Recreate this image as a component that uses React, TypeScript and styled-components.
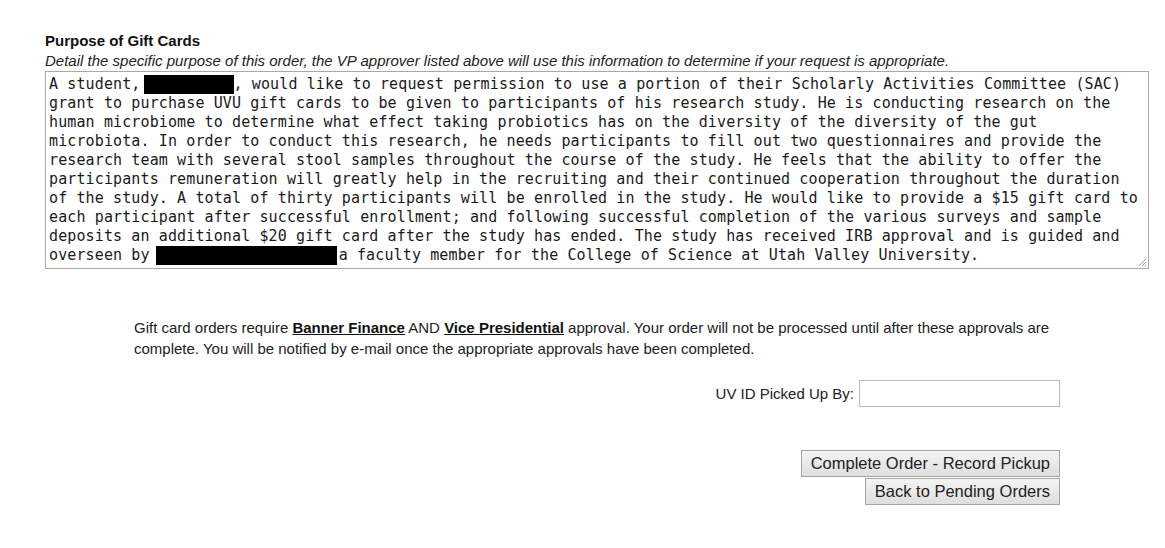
import React from "react";
import styled, { createGlobalStyle } from "styled-components";

const GlobalStyle = createGlobalStyle`
  html, body {
    margin: 0;
    padding: 0;
    background: #ffffff;
    font-family: "Liberation Sans", Arial, sans-serif;
    color: #222222;
  }
`;

const Page = styled.div`
  width: 1165px;
  padding-top: 31px;
  box-sizing: border-box;
`;

const PurposeSection = styled.section`
  padding: 0 16px 0 45px;
`;

const Heading = styled.div`
  font-size: 15px;
  font-weight: bold;
  color: #111111;
  line-height: 20px;
`;

const Hint = styled.div`
  font-size: 15px;
  font-style: italic;
  color: #222222;
  line-height: 20px;
`;

const TextBox = styled.div`
  position: relative;
  width: 1104px;
  height: 198px;
  box-sizing: border-box;
  border: 1px solid #a9a9a9;
  padding: 3px 3px;
  font-family: "DejaVu Sans Mono", "Liberation Mono", monospace;
  font-size: 15px;
  letter-spacing: 0.12px;
  line-height: 19px;
  color: #1a1a1a;
  white-space: pre;
  overflow: hidden;
`;

const Redacted = styled.span<{ $w: number; $ml?: number; $mr?: number }>`
  display: inline-block;
  width: ${(p) => p.$w}px;
  height: 19px;
  margin-left: ${(p) => p.$ml ?? 0}px;
  margin-right: ${(p) => p.$mr ?? 0}px;
  background: #000000;
  vertical-align: top;
`;

const Grip = styled.svg`
  position: absolute;
  right: 1px;
  bottom: 1px;
`;

const Approvals = styled.section`
  margin: 48px 0 0 134px;
  width: 926px;
`;

const Notice = styled.p`
  margin: 0;
  font-size: 15px;
  line-height: 21px;
  color: #222222;
  width: 926px;
`;

const Strong = styled.a`
  font-weight: bold;
  color: #111111;
  text-decoration: underline;
`;

const PickupRow = styled.div`
  display: flex;
  justify-content: flex-end;
  align-items: center;
  gap: 5px;
  margin-top: 21px;
`;

const Label = styled.label`
  font-size: 15px;
  color: #222222;
`;

const TextInput = styled.input`
  width: 201px;
  height: 27px;
  box-sizing: border-box;
  margin: 0;
  border: 1px solid #b9b9b9;
  padding: 2px 4px;
  font-family: "Liberation Sans", Arial, sans-serif;
  font-size: 15px;
`;

const Actions = styled.div`
  display: flex;
  flex-direction: column;
  align-items: flex-end;
  gap: 1px;
  margin-top: 43px;
`;

const Button = styled.button`
  height: 27px;
  box-sizing: border-box;
  margin: 0;
  padding: 0 9px;
  border: 1px solid #a5a5a5;
  border-radius: 0;
  background: linear-gradient(#f4f4f4, #dedede);
  font-family: "Liberation Sans", Arial, sans-serif;
  font-size: 16.5px;
  color: #222222;
  line-height: 25px;
`;

const App: React.FC = (): JSX.Element => {
  return (
    <Page>
      <GlobalStyle />
      <PurposeSection>
        <Heading>Purpose of Gift Cards</Heading>
        <Hint>
          Detail the specific purpose of this order, the VP approver listed above will use this information to determine if your request is appropriate.
        </Hint>
        <TextBox>
          {"A student,"}
          <Redacted $w={90} $ml={3} />
          {", would like to request permission to use a portion of their Scholarly Activities Committee (SAC)\n"}
          {"grant to purchase UVU gift cards to be given to participants of his research study. He is conducting research on the\n"}
          {"human microbiome to determine what effect taking probiotics has on the diversity of the diversity of the gut\n"}
          {"microbiota. In order to conduct this research, he needs participants to fill out two questionnaires and provide the\n"}
          {"research team with several stool samples throughout the course of the study. He feels that the ability to offer the\n"}
          {"participants remuneration will greatly help in the recruiting and their continued cooperation throughout the duration\n"}
          {"of the study. A total of thirty participants will be enrolled in the study. He would like to provide a $15 gift card to\n"}
          {"each participant after successful enrollment; and following successful completion of the various surveys and sample\n"}
          {"deposits an additional $20 gift card after the study has ended. The study has received IRB approval and is guided and\n"}
          {"overseen by"}
          <Redacted $w={181} $ml={6} $mr={2} />
          {"a faculty member for the College of Science at Utah Valley University."}
          <Grip width="10" height="10" viewBox="0 0 10 10">
            <path d="M9 2 L2 9 M9 5 L5 9 M9 8 L8 9" stroke="#9a9a9a" strokeWidth="1" />
          </Grip>
        </TextBox>
      </PurposeSection>

      <Approvals>
        <Notice>
          Gift card orders require <Strong>Banner Finance</Strong> AND <Strong>Vice Presidential</Strong> approval. Your order will not be processed until after these approvals are complete. You will be notified by e-mail once the appropriate approvals have been completed.
        </Notice>
        <PickupRow>
          <Label htmlFor="pickup">UV ID Picked Up By:</Label>
          <TextInput id="pickup" type="text" />
        </PickupRow>
        <Actions>
          <Button>Complete Order - Record Pickup</Button>
          <Button>Back to Pending Orders</Button>
        </Actions>
      </Approvals>
    </Page>
  );
};

export default App;
